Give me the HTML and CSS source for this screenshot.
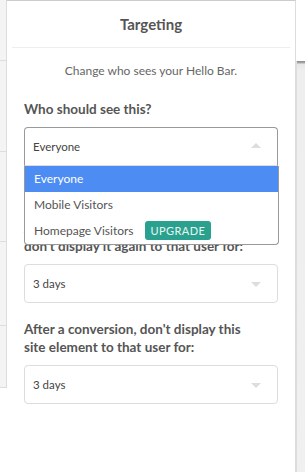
FILE: index.html
```html
<!DOCTYPE html>
<html lang="en">
<head>
    <meta charset="UTF-8">
    <meta name="viewport" content="width=device-width, initial-scale=1.0">
    <title>Targeting</title>
    <link rel="stylesheet" href="styles.css">
</head>
<body>
    <div class="page">
        <div class="side-left">
            <div class="row"></div>
            <div class="row r2"></div>
            <div class="row r3"></div>
            <div class="row r4"></div>
            <div class="row r5"></div>
        </div>

        <div class="modal">
            <div class="modal-head">
                <h2>Targeting</h2>
            </div>
            <p class="intro">Change who sees your Hello Bar.</p>

            <div class="field first">
                <label class="label">Who should see this?</label>
                <div class="select open">
                    <span>Everyone</span>
                    <i class="caret up"></i>
                </div>
                <ul class="menu">
                    <li class="active">Everyone</li>
                    <li>Mobile Visitors</li>
                    <li>Homepage Visitors <span class="badge">UPGRADE</span></li>
                </ul>
            </div>

            <div class="field second">
                <label class="label">After a visitor closes this bar,<br>don't display it again to that user for:</label>
                <div class="select">
                    <span>3 days</span>
                    <i class="caret"></i>
                </div>
            </div>

            <div class="field third">
                <label class="label">After a conversion, don't display this site element to that user for:</label>
                <div class="select">
                    <span>3 days</span>
                    <i class="caret"></i>
                </div>
            </div>
        </div>

        <div class="side-right">
            <div class="scroll"></div>
        </div>
    </div>
</body>
</html>
```

FILE: styles.css
```css
body {
    margin: 0;
    padding: 0;
    background-color: #fff;
    color: #555;
    font-family: Lato, "Liberation Sans", sans-serif;
    overflow: hidden;
}

.page {
    display: flex;
    height: 472px;
}

.side-left {
    width: 6px;
    height: 387px;
    background-color: #f4f4f4;
    border-right: 1px solid #ddd;
    border-bottom: 1px solid #ddd;
}

.side-left .row {
    height: 60px;
    border-bottom: 1px solid #ddd;
}
.side-left .r2 { height: 90px; }
.side-left .r3 { height: 89px; }
.side-left .r4 { height: 83px; }
.side-left .r5 { height: 60px; border-bottom: none; }

.modal {
    width: 289px;
    border-top: 1px solid #ccc;
    border-right: 1px solid #ddd;
    box-sizing: border-box;
    flex-shrink: 0;
}

.modal-head {
    margin: 0 5px;
    height: 46px;
    border-bottom: 1px solid #eee;
    display: flex;
    align-items: center;
    justify-content: center;
}

.modal-head h2 {
    margin: 0;
    font-size: 15px;
    font-weight: 700;
    color: #555;
}

.intro {
    margin: 15px 0 0;
    text-align: center;
    font-size: 12px;
    line-height: 16px;
    color: #666;
}

.field {
    position: relative;
    padding: 0 17px;
}

.field.first { margin-top: 21px; }
.field.second { margin-top: 53px; }
.field.third { margin-top: 17px; }

.label {
    display: block;
    font-size: 13.5px;
    font-weight: 700;
    line-height: 18px;
    color: #555;
    margin-bottom: 9px;
    padding-right: 8px;
}

.third .label {
    padding-right: 22px;
}

.select {
    position: relative;
    height: 37px;
    border: 1px solid #ddd;
    border-radius: 4px;
    display: flex;
    align-items: center;
    padding: 0 8px;
    font-size: 11.5px;
    color: #444;
}

.select.open {
    border-color: #999;
    border-bottom-color: #ddd;
    border-radius: 4px 4px 0 0;
}

.caret {
    position: absolute;
    right: 16px;
    top: 17px;
    width: 0;
    height: 0;
    border-left: 5px solid transparent;
    border-right: 5px solid transparent;
    border-top: 5px solid #ddd;
}

.caret.up {
    top: 15px;
    border-top: none;
    border-bottom: 5px solid #ddd;
}

.menu {
    position: absolute;
    left: 17px;
    right: 16px;
    top: 66px;
    margin: 0;
    padding: 0;
    list-style: none;
    background-color: #fff;
    border: 1px solid #999;
    border-top: none;
    border-radius: 0 0 4px 4px;
    z-index: 2;
}

.menu li {
    height: 26px;
    line-height: 26px;
    padding: 0 9px;
    font-size: 12px;
    color: #555;
}

.menu li.active {
    background-color: #4c8cf3;
    color: #fff;
}

.badge {
    display: inline-block;
    margin-left: 8px;
    padding: 0 6px;
    line-height: 19px;
    border-radius: 3px;
    background-color: #2aa08e;
    color: #e8f7f3;
    font-size: 11px;
    letter-spacing: 0.4px;
}

.side-right {
    flex: 1;
    padding-top: 61px;
}

.scroll {
    height: 411px;
    background: linear-gradient(#8a8a8a 0, #aaa 2px, #e6e6e6 3px, #eee 10px, #f0f0f0 100%);
    border-left: 1px solid #ddd;
}
```
